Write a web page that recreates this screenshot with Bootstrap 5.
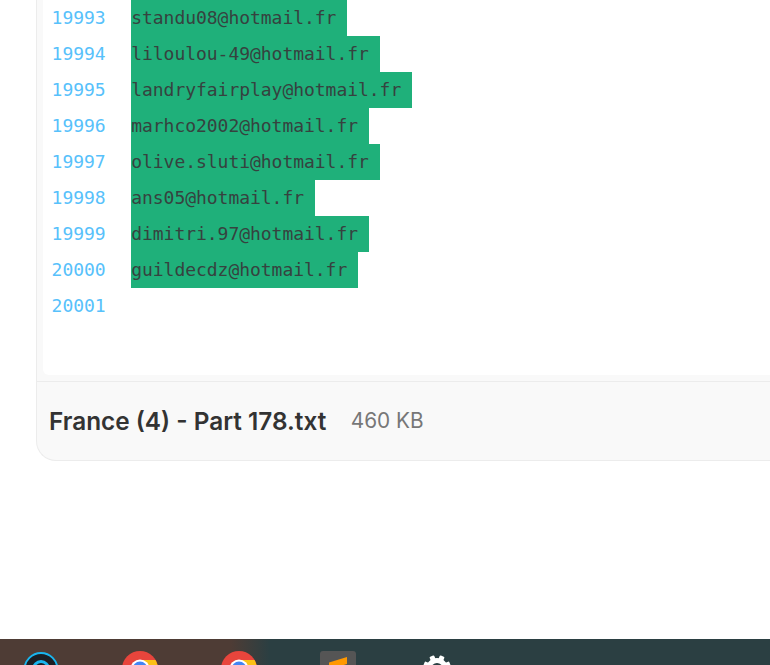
<!DOCTYPE html>
<html lang="en">
<head>
<meta charset="utf-8">
<title>France (4) - Part 178.txt</title>
<link href="https://cdn.jsdelivr.net/npm/bootstrap@5.3.0/dist/css/bootstrap.min.css" rel="stylesheet">
<style>
html,body{height:665px;overflow:hidden;background:#fff}
.page-shell{height:639px;padding-left:36px;overflow:hidden}
.file-card{width:760px;height:461px;background:#f9f9f9;border:1px solid #ececec;border-top:0;border-right:0;border-radius:0 0 0 20px;display:flex;flex-direction:column}
.code-area{height:375px;margin-left:6px;background:#fff;border-radius:0 0 0 6px;padding-left:8px;font-family:"DejaVu Sans Mono","Liberation Mono",monospace;font-size:18px;line-height:35px;letter-spacing:-.036px}
.code-line{display:flex;height:36px}
.line-no{width:80.2px;padding-left:.6px;flex:none;color:#57c1fb}
.line-text{background:#1fb07a;color:#36423f;white-space:pre;padding-right:10.8px;height:36px}
.file-foot{margin-top:6px;flex:1;border-top:1px solid #ececec;padding-left:12px;gap:24.5px;font-family:Inter,"Noto Sans",sans-serif}
.file-name{font-size:24.35px;font-weight:600;color:#333}
.file-size{font-size:20.8px;color:#777}
.task-bar{height:26px;background:linear-gradient(90deg,#4e3c35 0,#4e3c35 30%,#2b3f42 35%,#2b3f42 100%);overflow:hidden;padding-top:12px}
.task-icon{display:block;flex:none}
.ic-a{margin-left:23px}.ic-b{margin-left:63px}.ic-c{margin-left:63px}.ic-d{margin-left:63px}.ic-e{margin-left:67px;margin-top:4px}
</style>
</head>
<body>
<div class="page-shell">
<div class="file-card">
<div class="code-area">
<div class="code-line"><span class="line-no">19993</span><span class="line-text">standu08@hotmail.fr</span></div>
<div class="code-line"><span class="line-no">19994</span><span class="line-text">liloulou-49@hotmail.fr</span></div>
<div class="code-line"><span class="line-no">19995</span><span class="line-text">landryfairplay@hotmail.fr</span></div>
<div class="code-line"><span class="line-no">19996</span><span class="line-text">marhco2002@hotmail.fr</span></div>
<div class="code-line"><span class="line-no">19997</span><span class="line-text">olive.sluti@hotmail.fr</span></div>
<div class="code-line"><span class="line-no">19998</span><span class="line-text">ans05@hotmail.fr</span></div>
<div class="code-line"><span class="line-no">19999</span><span class="line-text">dimitri.97@hotmail.fr</span></div>
<div class="code-line"><span class="line-no">20000</span><span class="line-text">guildecdz@hotmail.fr</span></div>
<div class="code-line"><span class="line-no">20001</span></div>
</div>
<div class="file-foot d-flex align-items-center"><span class="file-name">France (4) - Part 178.txt</span><span class="file-size">460 KB</span></div>
</div>
</div>
<div class="task-bar d-flex align-items-start">
<svg class="task-icon ic-a" width="36" height="36" viewBox="0 0 36 36"><circle cx="18" cy="18.5" r="16.5" fill="#1c1f24" stroke="#19b5ee" stroke-width="2"/><circle cx="18" cy="18" r="7.5" fill="none" stroke="#19b5ee" stroke-width="3"/></svg>
<svg class="task-icon ic-b" width="36" height="36" viewBox="0 0 36 36"><circle cx="18" cy="18" r="18" fill="#e8453c"/><path d="M0 18a18 18 0 0 0 9 15.6L18 18H4z" fill="#34a853"/><path d="M18 9h15.5A18 18 0 0 1 36 18L27 33 18 18z" fill="#fbc116"/><circle cx="18" cy="18" r="9.5" fill="#fff"/><circle cx="18" cy="18" r="7.5" fill="#4285f4"/></svg>
<svg class="task-icon ic-c" width="36" height="36" viewBox="0 0 36 36"><circle cx="18" cy="18" r="18" fill="#e8453c"/><path d="M0 18a18 18 0 0 0 9 15.6L18 18H4z" fill="#34a853"/><path d="M18 9h15.5A18 18 0 0 1 36 18L27 33 18 18z" fill="#fbc116"/><circle cx="18" cy="18" r="9.5" fill="#fff"/><circle cx="18" cy="18" r="7.5" fill="#4285f4"/></svg>
<svg class="task-icon ic-d" width="36" height="36" viewBox="0 0 36 36"><rect width="36" height="36" rx="3" fill="#555"/><path d="M9 11.5 27 6v7L9 18.5z" fill="#ff9800"/></svg>
<svg class="task-icon ic-e" width="28" height="28" viewBox="0 0 28 28"><circle cx="14" cy="14" r="8.5" fill="none" stroke="#fff" stroke-width="5"/><g fill="#fff"><rect x="11.5" y="0" width="5" height="6" rx="1" transform="rotate(22.5 14 14)"/><rect x="11.5" y="0" width="5" height="6" rx="1" transform="rotate(-22.5 14 14)"/><rect x="11.5" y="0" width="5" height="6" rx="1" transform="rotate(67.5 14 14)"/><rect x="11.5" y="0" width="5" height="6" rx="1" transform="rotate(-67.5 14 14)"/></g></svg>
</div>
</body>
</html>
